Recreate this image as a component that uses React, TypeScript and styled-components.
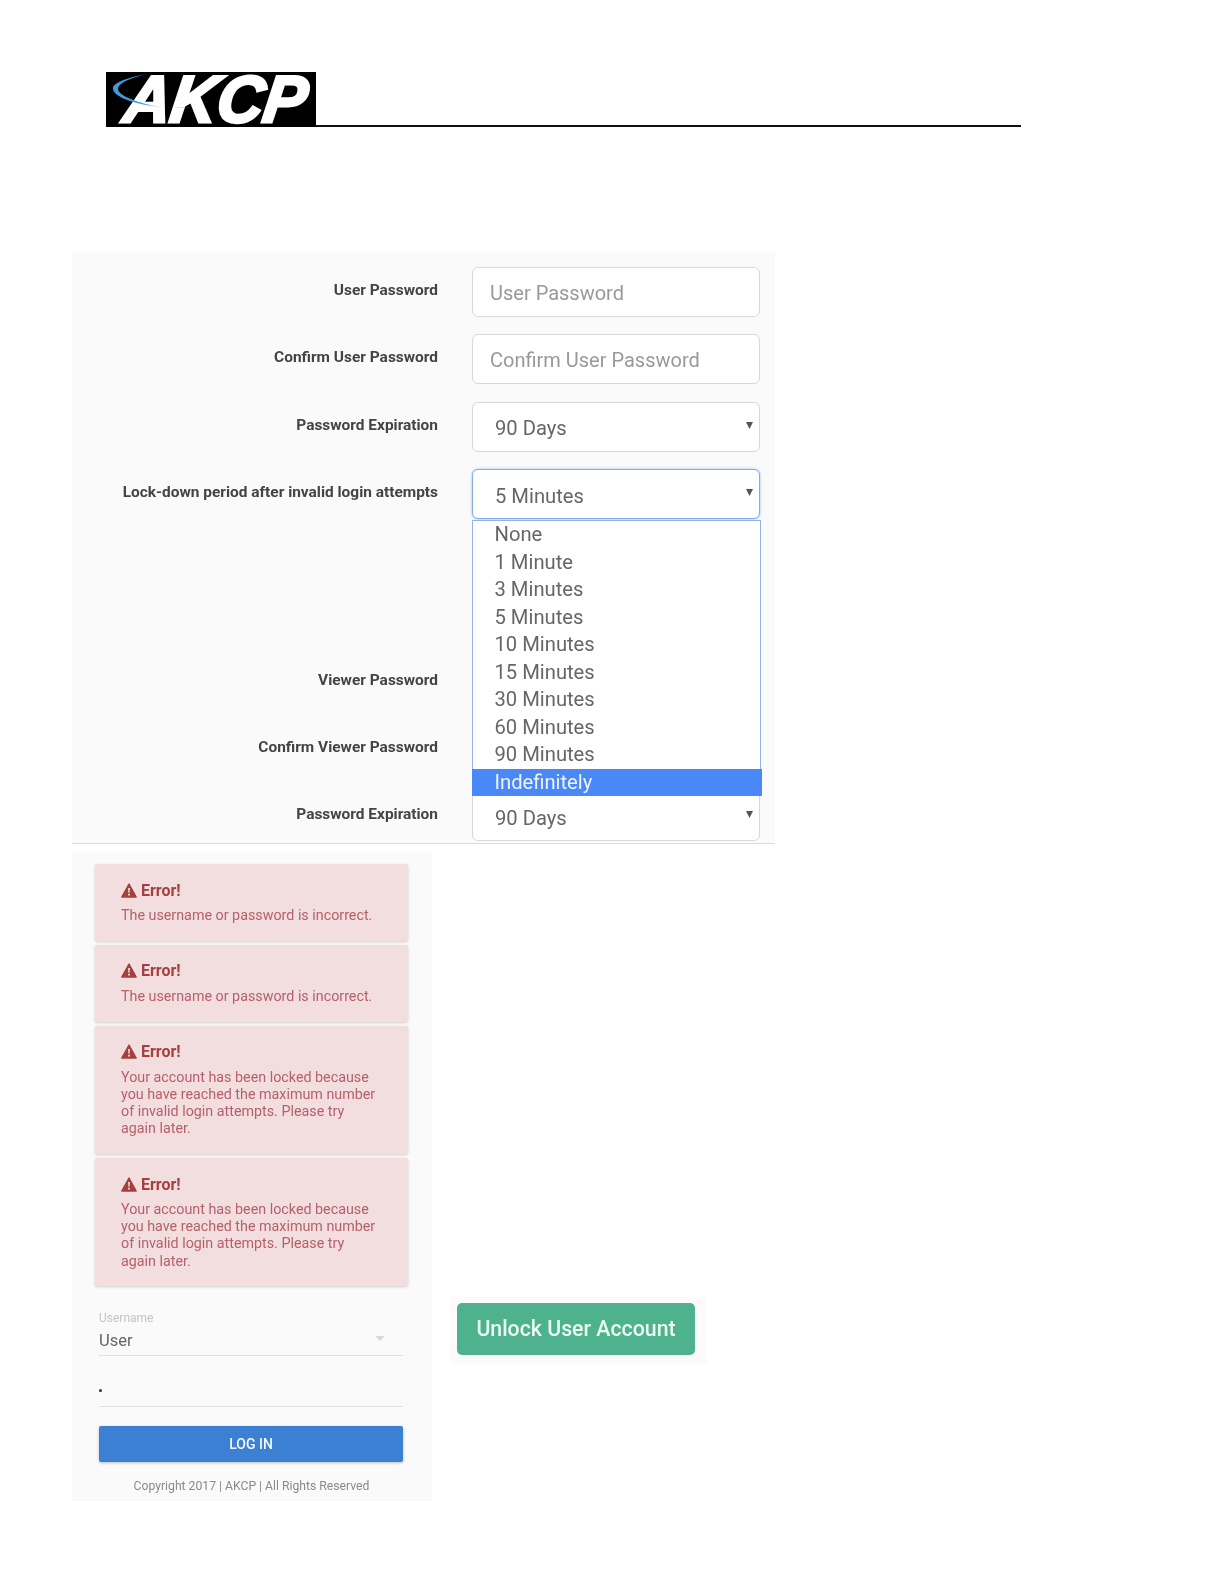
import React from 'react';
import styled, { createGlobalStyle } from 'styled-components';

const Global = createGlobalStyle`
  html, body { margin: 0; padding: 0; background: #fff; }
  body { font-family: Roboto, "Liberation Sans", sans-serif; color: #555; }
  * { box-sizing: border-box; }
`;

const Page = styled.div`
  width: 1224px;
  height: 1584px;
  padding: 72px 0 0 72px;
  overflow: hidden;
`;

const Header = styled.header`
  width: 915px;
  margin-left: 34px;
  height: 55px;
  border-bottom: 2px solid #111;
  margin-bottom: 125px;
`;

const LogoBox = styled.svg`
  display: block;
  width: 210px;
  height: 55px;
  overflow: visible;
`;

const FormPanel = styled.section`
  width: 703px;
  height: 592px;
  background: #fafafa;
  border-bottom: 1px solid #dcdcdc;
  padding: 15px 15px 0 0;
  filter: blur(0.3px);
`;

const Group = styled.div<{ $gap?: number }>`
  display: flex;
  flex-direction: column;
  gap: 17.4px;
  margin-top: ${p => p.$gap ?? 0}px;
`;

const Row = styled.div`
  display: grid;
  grid-template-columns: 366px 288px;
  column-gap: 34px;
  height: 50px;
`;

const Label = styled.label`
  text-align: right;
  font-size: 15.45px;
  font-weight: 700;
  line-height: 20px;
  padding-top: 13px;
  color: #444;
`;

const Control = styled.div`
  position: relative;
  height: 50px;
`;

const TextInput = styled.input`
  display: block;
  width: 100%;
  height: 50px;
  padding: 2px 17px 0;
  border: 1.5px solid #d8d8d8;
  border-radius: 6px;
  background: #fff;
  font: 400 20px Roboto, sans-serif;
  outline: none;
  &::placeholder { color: #999; opacity: 1; }
`;

const SelectBox = styled.div<{ $focused?: boolean }>`
  display: flex;
  align-items: center;
  justify-content: space-between;
  height: 50px;
  padding: 3px 6px 0 22px;
  border: 1.5px solid ${p => (p.$focused ? '#86abe6' : '#d8d8d8')};
  border-radius: 6px;
  background: #fff;
  font-size: 20.2px;
  color: #666;
  box-shadow: ${p => (p.$focused ? '0 0 3px rgba(90,150,235,.6)' : 'none')};
`;

const Caret = styled.svg`
  width: 7px;
  height: 7px;
  margin-bottom: 6px;
  fill: #555;
`;

const Menu = styled.ul`
  position: absolute;
  z-index: 2;
  top: 100%;
  left: 0;
  right: -1px;
  margin: 1px 0 0;
  padding: 0;
  list-style: none;
  background: #fff;
  border: 1.5px solid #93b3e8;
  border-bottom: 0;
`;

const MenuItem = styled.li<{ $active?: boolean }>`
  height: 27.5px;
  line-height: 27.5px;
  padding-left: ${p => (p.$active ? 23 : 21.5)}px;
  font-size: 20.2px;
  color: ${p => (p.$active ? '#eef4ff' : '#666')};
  background: ${p => (p.$active ? '#4a88f7' : 'transparent')};
  margin: ${p => (p.$active ? '0 -1.5px' : '0')};
`;

const Lower = styled.div`
  display: flex;
  align-items: flex-start;
  margin-top: 8px;
`;

const LoginPanel = styled.section`
  width: 360px;
  height: 649px;
  background: #fafafa;
  padding: 12px 24px 0 23px;
  filter: blur(0.3px);
`;

const AlertStack = styled.div`
  display: flex;
  flex-direction: column;
  gap: 4px;
  margin-bottom: 24.5px;
`;

const Alert = styled.div`
  padding: 15px 29px 16.6px 26px;
  background: #f2dede;
  border-radius: 2px;
  box-shadow: 0 1px 3px rgba(0, 0, 0, .18);
`;

const AlertTitle = styled.div`
  display: flex;
  align-items: center;
  gap: 4px;
  height: 22px;
  font-size: 16px;
  font-weight: 700;
  color: #a4403f;
`;

const AlertIcon = styled.svg`
  width: 16px;
  height: 15px;
  flex: none;
`;

const AlertBody = styled.p`
  margin: 6px 0 0;
  font-size: 14.3px;
  line-height: 17.2px;
  color: #b5606a;
`;

const Field = styled.div`
  position: relative;
  margin: 0 5px 0 4px;
  border-bottom: 1px solid #e0e0e0;
`;

const FieldLabel = styled.div`
  font-size: 12px;
  line-height: 14px;
  color: #c4c4c4;
`;

const FieldValue = styled.div`
  font-size: 16.5px;
  line-height: 22px;
  height: 30.5px;
  padding-top: 5px;
  color: #666;
`;

const FieldCaret = styled.span`
  position: absolute;
  right: 18px;
  top: 25px;
  border: 5px solid transparent;
  border-top-color: #d8d8d8;
  border-bottom: 0;
`;

const DotField = styled(Field)`
  height: 51px;
  padding-top: 33px;
`;

const Dot = styled.span`
  display: block;
  width: 3px;
  height: 3px;
  border-radius: 50%;
  background: #333;
`;

const LoginButton = styled.button`
  display: block;
  width: 304px;
  height: 36px;
  margin: 19px 0 0 4px;
  border: 0;
  border-radius: 2px;
  background: #3b80d3;
  color: #f4f8fd;
  font: 500 14px Roboto, sans-serif;
  box-shadow: 0 1px 3px rgba(0, 0, 0, .25);
`;

const Copyright = styled.div`
  margin-top: 16px;
  text-align: center;
  font-size: 12.2px;
  line-height: 16px;
  color: #8a8a8a;
`;

const UnlockPanel = styled.div`
  margin: 445px 0 0 18px;
  padding: 6px 12px 9px 7px;
  background: #fbfbfb;
  filter: blur(0.3px);
`;

const UnlockButton = styled.button`
  display: block;
  width: 238px;
  height: 52px;
  padding: 0 0 2px;
  border: 0;
  border-radius: 5px;
  background: #4fb28e;
  color: #eafaf4;
  font: 500 21.3px Roboto, sans-serif;
`;

const CaretIcon = () => (
  <Caret viewBox="0 0 7 7"><path d="M0 0h7L3.5 7z" /></Caret>
);

const options = ['None', '1 Minute', '3 Minutes', '5 Minutes', '10 Minutes', '15 Minutes', '30 Minutes', '60 Minutes', '90 Minutes', 'Indefinitely'];

const AlertBlock = ({ text }: { text: string }) => (
  <Alert>
    <AlertTitle>
      <AlertIcon viewBox="0 0 16 15">
        <path d="M8 1 15.2 14H.8Z" fill="#a4403f" stroke="#a4403f" strokeWidth="1.4" strokeLinejoin="round" />
        <path d="M7.1 5h1.8l-.3 4.8H7.4ZM7.1 10.8h1.8v1.8H7.1Z" fill="#f2dede" />
      </AlertIcon>
      Error!
    </AlertTitle>
    <AlertBody>{text}</AlertBody>
  </Alert>
);

const locked = 'Your account has been locked because you have reached the maximum number of invalid login attempts. Please try again later.';
const wrong = 'The username or password is incorrect.';

export default function App() {
  return (
    <Page>
      <Global />
      <Header>
        <LogoBox viewBox="0 0 210 55">
          <rect width="210" height="55" fill="#000" />
          <text
            x="5"
            y="50"
            fill="#fff"
            stroke="#fff"
            strokeWidth="3"
            fontFamily="Liberation Sans, sans-serif"
            fontWeight="700"
            fontStyle="italic"
            fontSize="66"
            textLength="182"
            lengthAdjust="spacingAndGlyphs"
            transform="skewX(-8) translate(18 0)"
          >AKCP</text>
          <path d="M41 2C20 6 6 11 7 17c1 8 22 16 50 18 20 1.5 40 0 40 0-20 1-40 1-53-2C28 29 12 23 12 17 12 11 24 6 41 2Z" fill="#3f9bdc" />
        </LogoBox>
      </Header>

      <FormPanel>
        <Group>
          <Row>
            <Label>User Password</Label>
            <Control><TextInput placeholder="User Password" /></Control>
          </Row>
          <Row>
            <Label>Confirm User Password</Label>
            <Control><TextInput placeholder="Confirm User Password" /></Control>
          </Row>
          <Row>
            <Label>Password Expiration</Label>
            <Control><SelectBox>90 Days<CaretIcon /></SelectBox></Control>
          </Row>
          <Row>
            <Label>Lock-down period after invalid login attempts</Label>
            <Control>
              <SelectBox $focused>5 Minutes<CaretIcon /></SelectBox>
              <Menu>
                {options.map(o => (
                  <MenuItem key={o} $active={o === 'Indefinitely'}>{o}</MenuItem>
                ))}
              </Menu>
            </Control>
          </Row>
        </Group>
        <Group $gap={137.5}>
          <Row>
            <Label>Viewer Password</Label>
            <Control><TextInput /></Control>
          </Row>
          <Row>
            <Label>Confirm Viewer Password</Label>
            <Control><TextInput /></Control>
          </Row>
          <Row>
            <Label>Password Expiration</Label>
            <Control><SelectBox>90 Days<CaretIcon /></SelectBox></Control>
          </Row>
        </Group>
      </FormPanel>

      <Lower>
        <LoginPanel>
          <AlertStack>
            <AlertBlock text={wrong} />
            <AlertBlock text={wrong} />
            <AlertBlock text={locked} />
            <AlertBlock text={locked} />
          </AlertStack>
          <Field>
            <FieldLabel>Username</FieldLabel>
            <FieldValue>User</FieldValue>
            <FieldCaret />
          </Field>
          <DotField><Dot /></DotField>
          <LoginButton>LOG IN</LoginButton>
          <Copyright>Copyright 2017 | AKCP | All Rights Reserved</Copyright>
        </LoginPanel>
        <UnlockPanel>
          <UnlockButton>Unlock User Account</UnlockButton>
        </UnlockPanel>
      </Lower>
    </Page>
  );
}
